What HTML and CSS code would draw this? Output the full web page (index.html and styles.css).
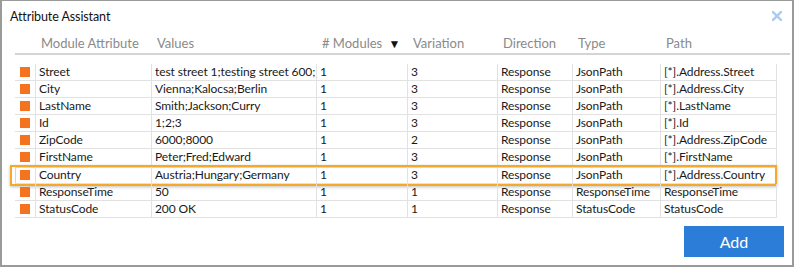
FILE: index.html
```html
<!DOCTYPE html>
<html lang="en">
<head>
    <meta charset="UTF-8">
    <title>Attribute Assistant</title>
    <link rel="stylesheet" href="styles.css">
</head>
<body>
    <div class="dialog">
        <div class="dialog-header">
            <span class="dialog-title">Attribute Assistant</span>
            <button class="close-btn" title="Close">
                <svg width="10" height="10" viewBox="0 0 10 10">
                    <path d="M1 1 L9 9 M9 1 L1 9" stroke="#a9cbee" stroke-width="2.4" stroke-linecap="square"/>
                </svg>
            </button>
        </div>

        <div class="attr-grid">
            <div class="grid-head">
                <div></div>
                <div>Module Attribute</div>
                <div>Values</div>
                <div># Modules <span class="sort">&#9660;</span></div>
                <div>Variation</div>
                <div>Direction</div>
                <div>Type</div>
                <div>Path</div>
            </div>
            <div class="grid-body">
                <div class="row"><div><span class="marker"></span></div><div>Street</div><div>test street 1;testing street 600;</div><div>1</div><div>3</div><div>Response</div><div>JsonPath</div><div>[*].Address.Street</div></div>
                <div class="row"><div><span class="marker"></span></div><div>City</div><div>Vienna;Kalocsa;Berlin</div><div>1</div><div>3</div><div>Response</div><div>JsonPath</div><div>[*].Address.City</div></div>
                <div class="row"><div><span class="marker"></span></div><div>LastName</div><div>Smith;Jackson;Curry</div><div>1</div><div>3</div><div>Response</div><div>JsonPath</div><div>[*].LastName</div></div>
                <div class="row"><div><span class="marker"></span></div><div>Id</div><div>1;2;3</div><div>1</div><div>3</div><div>Response</div><div>JsonPath</div><div>[*].Id</div></div>
                <div class="row"><div><span class="marker"></span></div><div>ZipCode</div><div>6000;8000</div><div>1</div><div>2</div><div>Response</div><div>JsonPath</div><div>[*].Address.ZipCode</div></div>
                <div class="row"><div><span class="marker"></span></div><div>FirstName</div><div>Peter;Fred;Edward</div><div>1</div><div>3</div><div>Response</div><div>JsonPath</div><div>[*].FirstName</div></div>
                <div class="row selected"><div><span class="marker"></span></div><div>Country</div><div>Austria;Hungary;Germany</div><div>1</div><div>3</div><div>Response</div><div>JsonPath</div><div>[*].Address.Country</div></div>
                <div class="row"><div><span class="marker"></span></div><div>ResponseTime</div><div>50</div><div>1</div><div>1</div><div>Response</div><div>ResponseTime</div><div>ResponseTime</div></div>
                <div class="row"><div><span class="marker"></span></div><div>StatusCode</div><div>200 OK</div><div>1</div><div>1</div><div>Response</div><div>StatusCode</div><div>StatusCode</div></div>
            </div>
        </div>

        <div class="dialog-footer">
            <button class="add-btn">Add</button>
        </div>
    </div>
</body>
</html>
```

FILE: styles.css
```css
body {
    margin: 0;
    font-family: Lato, "Open Sans", sans-serif;
    font-size: 12px;
    letter-spacing: -0.1px;
    color: #1a1a1a;
    background: #fff;
}

.dialog {
    box-sizing: border-box;
    width: 794px;
    height: 267px;
    border: 2px solid #9a9a9a;
    border-top-width: 1px;
    display: flex;
    flex-direction: column;
    background: #fff;
}

.dialog-header {
    display: flex;
    justify-content: space-between;
    align-items: center;
    height: 30px;
    padding: 0 8px 0 8px;
}

.dialog-title {
    font-size: 12.5px;
    color: #111;
}

.close-btn {
    border: none;
    background: none;
    padding: 0;
    width: 14px;
    height: 14px;
    display: flex;
    align-items: center;
    justify-content: center;
}

.attr-grid {
    margin-left: 13px;
    padding-top: 1px;
}

.grid-head,
.row {
    display: grid;
    grid-template-columns: 21px 116px 165px 91px 90px 75px 88px 116px;
}

.grid-head {
    width: 775px;
    height: 21px;
    align-items: center;
    font-size: 13px;
    letter-spacing: 0;
    color: #8a8a8a;
    border-bottom: 2px solid #d4d4d4;
}

.grid-head > div {
    padding-left: 5px;
    white-space: nowrap;
}

.sort {
    color: #111;
    font-size: 12px;
    margin-left: 3px;
}

.grid-body {
    margin-top: 9px;
}

.row {
    width: 762px;
    height: 17px;
    position: relative;
}

.row > div {
    box-sizing: border-box;
    border-right: 1px solid #e2e2e2;
    border-bottom: 1px solid #e2e2e2;
    padding-left: 3px;
    line-height: 16px;
    white-space: nowrap;
    overflow: hidden;
}

.row > div:first-child {
    padding-left: 5px;
}

.marker {
    display: inline-block;
    width: 10px;
    height: 10px;
    background: #f4731f;
    vertical-align: -1px;
}

.row.selected {
    margin-top: 1px;
    box-shadow: inset 0 0 0 1px #d6d6d6;
}

.row.selected::after {
    content: "";
    position: absolute;
    left: -5px;
    right: 0;
    top: -2px;
    bottom: -2px;
    border: 2px solid #f6a928;
    box-shadow: 0 1px 3px rgba(0, 0, 0, 0.25);
    pointer-events: none;
}

.dialog-footer {
    margin-top: auto;
    display: flex;
    justify-content: flex-end;
    padding: 0 8px 8px 0;
}

.add-btn {
    width: 100px;
    height: 31px;
    border: none;
    background: #2b7dd8;
    color: #fff;
    font-family: inherit;
    font-size: 16px;
}
```
